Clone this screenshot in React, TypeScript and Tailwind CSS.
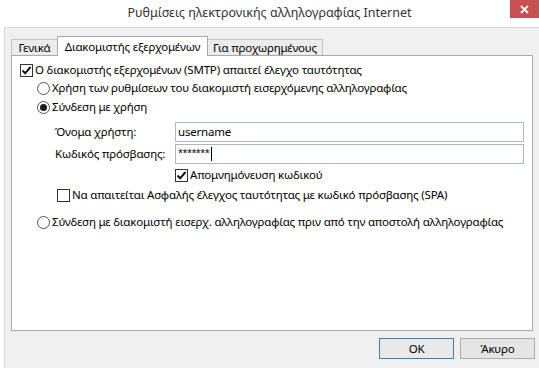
import React from "react";

function Check({ checked }: { checked?: boolean }) {
  return (
    <div className="w-[13px] h-[13px] border border-[#333] bg-white flex items-center justify-center shrink-0">
      {checked && (
        <svg width="11" height="11" viewBox="0 0 11 11">
          <path d="M1.5 5.5 L4.2 8.3 L9.5 2" fill="none" stroke="#111" strokeWidth="2" />
        </svg>
      )}
    </div>
  );
}

function Radio({ checked }: { checked?: boolean }) {
  return (
    <div className="w-[13px] h-[13px] rounded-full border border-[#555] bg-white flex items-center justify-center shrink-0">
      {checked && <div className="w-[7px] h-[7px] rounded-full bg-[#1a1a1a]" />}
    </div>
  );
}

export default function App() {
  return (
    <div className="w-[539px] h-[368px] bg-white flex flex-col overflow-hidden text-[11.5px] tracking-[-0.2px] text-black font-['Noto_Sans',sans-serif] leading-none whitespace-nowrap">
      {/* title bar */}
      <div className="h-[27px] relative flex items-center justify-center shrink-0">
        <span className="text-[12.5px] tracking-normal text-[#333]">Ρυθμίσεις ηλεκτρονικής αλληλογραφίας Internet</span>
        <div className="absolute right-0 top-0 w-[29px] h-[18px] bg-[#c75050] flex items-center justify-center">
          <svg width="9" height="9" viewBox="0 0 9 9">
            <path d="M1 1 L8 8 M8 1 L1 8" stroke="#fff" strokeWidth="1.8" />
          </svg>
        </div>
      </div>
      <div className="flex-1 flex">
        <div className="w-[4px] bg-white" />
        <div className="flex-1 bg-[#f0f0f0] border-l border-t border-[#d6d6d6] flex flex-col pl-[6px] pr-[6px] pt-[8px]">
          {/* tabs */}
          <div className="h-[19px] flex items-end">
            <div className="w-[47px] h-[16px] border-l border-t border-r border-[#c4c4c4] bg-[#ececec] flex items-center justify-center">
              Γενικά
            </div>
            <div className="w-[151px] h-[20px] -mb-px -ml-px border-l border-t border-r border-[#a9a9a9] bg-white flex items-center justify-center relative z-10">
              Διακομιστής εξερχομένων
            </div>
            <div className="w-[116px] h-[16px] -ml-px border-l border-t border-r border-[#c4c4c4] bg-[#ececec] flex items-center justify-center">
              Για προχωρημένους
            </div>
          </div>
          {/* panel */}
          <div className="h-[276px] border border-[#a9a9a9] bg-white flex flex-col pt-[5px]">
            <div className="h-[18px] flex items-center pl-[8px] gap-[2px]">
              <Check checked />
              <span>Ο διακομιστής εξερχομένων (SMTP) απαιτεί έλεγχο ταυτότητας</span>
            </div>
            <div className="h-[18px] flex items-center pl-[25px] gap-[2px]">
              <Radio />
              <span>Χρήση των ρυθμίσεων του διακομιστή εισερχόμενης αλληλογραφίας</span>
            </div>
            <div className="h-[18px] mt-px flex items-center pl-[25px] gap-[2px]">
              <Radio checked />
              <span>Σύνδεση με χρήση</span>
            </div>
            <div className="h-[20px] mt-[6px] flex items-center pl-[43px]">
              <span className="w-[120px] shrink-0">Όνομα χρήστη:</span>
              <div className="w-[349px] h-[20px] border border-[#abb6c4] bg-white flex items-center pl-[2px]">
                username
              </div>
            </div>
            <div className="h-[20px] mt-[2px] flex items-center pl-[43px]">
              <span className="w-[120px] shrink-0">Κωδικός πρόσβασης:</span>
              <div className="w-[349px] h-[20px] border border-[#abb6c4] bg-white flex items-center pl-[2px]">
                <span className="text-[9px] tracking-[-0.5px] -mt-[3px]">*******</span>
                <span className="w-px h-[14px] bg-black ml-[2px]" />
              </div>
            </div>
            <div className="h-[18px] mt-[2px] flex items-center pl-[163px] gap-[2px]">
              <Check checked />
              <span>Απομνημόνευση κωδικού</span>
            </div>
            <div className="h-[18px] mt-[2px] flex items-center pl-[45px] gap-[2px]">
              <Check />
              <span>Να απαιτείται Ασφαλής έλεγχος ταυτότητας με κωδικό πρόσβασης (SPA)</span>
            </div>
            <div className="h-[18px] mt-[9px] flex items-center pl-[25px] gap-[2px]">
              <Radio />
              <span>Σύνδεση με διακομιστή εισερχ. αλληλογραφίας πριν από την αποστολή αλληλογραφίας</span>
            </div>
          </div>
          {/* footer */}
          <div className="flex justify-end gap-[6px] mt-[7px] -mr-[2px]">
            <div className="w-[75px] h-[21px] border border-[#3c7fb1] bg-[#e9e9e9] flex items-center justify-center">
              OK
            </div>
            <div className="w-[75px] h-[21px] border border-[#acacac] bg-[#e5e5e5] flex items-center justify-center">
              Άκυρο
            </div>
          </div>
        </div>
      </div>
    </div>
  );
}
